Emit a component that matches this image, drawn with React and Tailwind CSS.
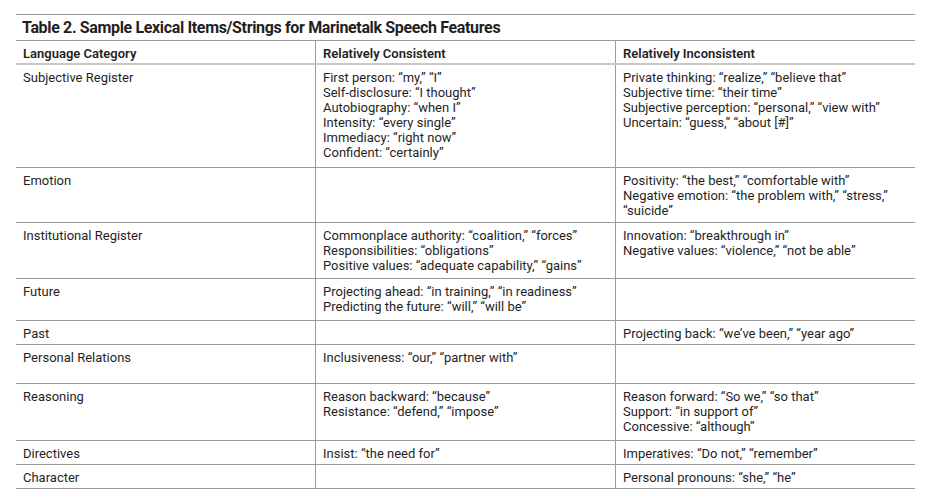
import React from "react";

const rows = [
  {
    cat: "Subjective Register",
    h: "h-[103px]",
    a: [
      "First person: “my,” “I”",
      "Self-disclosure: “I thought”",
      "Autobiography: “when I”",
      "Intensity: “every single”",
      "Immediacy: “right now”",
      "Confident: “certainly”",
    ],
    b: [
      "Private thinking: “realize,” “believe that”",
      "Subjective time: “their time”",
      "Subjective perception: “personal,” “view with”",
      "Uncertain: “guess,” “about [#]”",
    ],
  },
  {
    cat: "Emotion",
    h: "h-[55px]",
    a: [],
    b: [
      "Positivity: “the best,” “comfortable with”",
      "Negative emotion: “the problem with,” “stress,”",
      "“suicide”",
    ],
  },
  {
    cat: "Institutional Register",
    h: "h-[56px]",
    a: [
      "Commonplace authority: “coalition,” “forces”",
      "Responsibilities: “obligations”",
      "Positive values: “adequate capability,” “gains”",
    ],
    b: [
      "Innovation: “breakthrough in”",
      "Negative values: “violence,” “not be able”",
    ],
  },
  {
    cat: "Future",
    h: "h-[42px]",
    a: [
      "Projecting ahead: “in training,” “in readiness”",
      "Predicting the future: “will,” “will be”",
    ],
    b: [],
  },
  {
    cat: "Past",
    h: "h-[24px]",
    a: [],
    b: ["Projecting back: “we’ve been,” “year ago”"],
  },
  {
    cat: "Personal Relations",
    h: "h-[39px]",
    a: ["Inclusiveness: “our,” “partner with”"],
    b: [],
  },
  {
    cat: "Reasoning",
    h: "h-[57px]",
    a: ["Reason backward: “because”", "Resistance: “defend,” “impose”"],
    b: [
      "Reason forward: “So we,” “so that”",
      "Support: “in support of”",
      "Concessive: “although”",
    ],
  },
  {
    cat: "Directives",
    h: "h-[24px]",
    a: ["Insist: “the need for”"],
    b: ["Imperatives: “Do not,” “remember”"],
  },
  {
    cat: "Character",
    h: "h-[24px]",
    a: [],
    b: ["Personal pronouns: “she,” “he”"],
  },
];

const Cell = ({ lines, border }) => (
  <div className={`pl-[7px] pt-[5px] ${border ? "border-l border-[#9a9a9a]" : ""}`}>
    {lines.map((l, i) => (
      <div key={i}>{l}</div>
    ))}
  </div>
);

export default function App() {
  return (
    <div className="w-[935px] h-[496px] bg-white pt-[14px] pl-[16px] font-['Roboto',sans-serif] text-[#1f1f1f]">
      <div className="w-[899px] border-t border-[#9a9a9a]">
        {/* Title */}
        <div className="h-[26px] border-b border-[#9a9a9a] pl-[6px] pt-[3px] text-[16px] font-bold leading-[20px] tracking-[-0.35px]">
          Table 2. Sample Lexical Items/Strings for Marinetalk Speech Features
        </div>

        {/* Header */}
        <div className="grid grid-cols-[299px_300px_300px] h-[24px] border-b-2 border-[#c8c8c8] text-[13px] leading-[15px] font-semibold">
          <div className="pl-[7px] pt-[5px]">Language Category</div>
          <div className="pl-[7px] pt-[5px] border-l border-[#9a9a9a]">Relatively Consistent</div>
          <div className="pl-[7px] pt-[5px] border-l border-[#9a9a9a]">Relatively Inconsistent</div>
        </div>

        {/* Body */}
        {rows.map((r) => (
          <div
            key={r.cat}
            className={`grid grid-cols-[299px_300px_300px] ${r.h} border-b border-[#9a9a9a] text-[13px] leading-[15px]`}
          >
            <Cell lines={[r.cat]} />
            <Cell lines={r.a} border />
            <Cell lines={r.b} border />
          </div>
        ))}
      </div>
    </div>
  );
}
